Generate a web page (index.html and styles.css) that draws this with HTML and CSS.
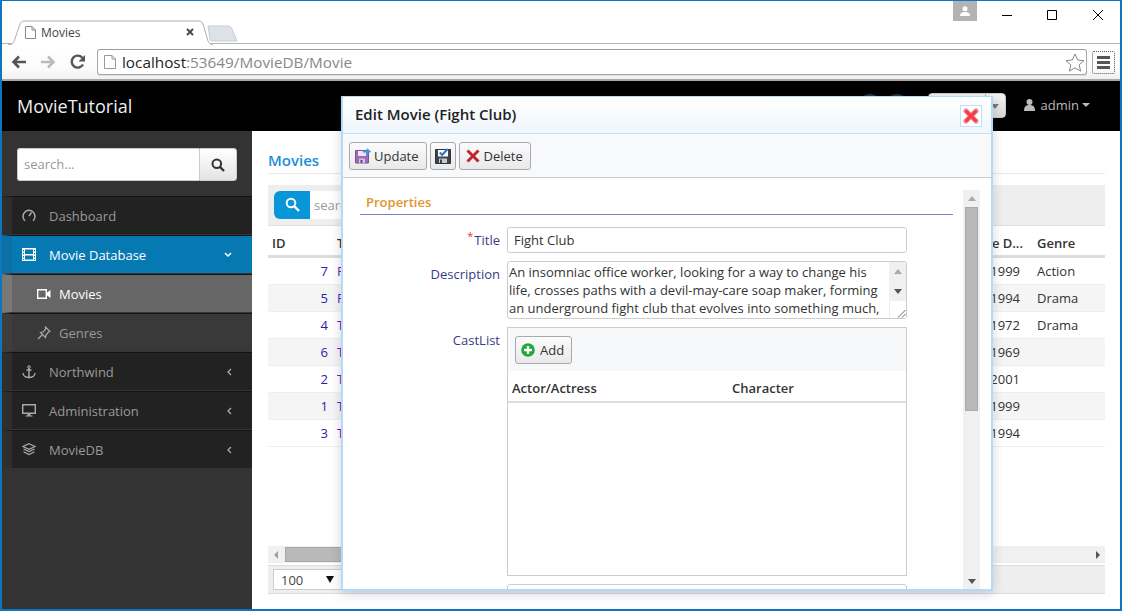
FILE: index.html
```html
<!DOCTYPE html>
<html lang="en">
<head>
<meta charset="utf-8">
<title>Movies</title>
<link rel="stylesheet" href="styles.css">
</head>
<body>
<div class="window">
  <header class="tabstrip">
    <div class="tab">
      <svg class="tab-shape" width="206" height="25" viewBox="0 0 206 25"><path d="M0 24.500h2c2 0 3-1 4-3L12 4c1-2 2-3 4-3h175c2 0 3 1 4 3l5 17c1 2 2 3.500 5 3.500" fill="#fff" stroke="#b0b0b0"/></svg>
      <svg class="tab-doc" width="11" height="13" viewBox="0 0 11 13"><path d="M.5.500h6.500l3.500 3.500v8.500h-10zM7 .5v3.500h3.500" fill="#fff" stroke="#8a8a8a"/></svg>
      <span class="tab-title">Movies</span>
      <svg class="tab-close" width="8" height="8" viewBox="0 0 8 8"><path d="M1 1l6 6M7 1l-6 6" stroke="#444" stroke-width="1.800"/></svg>
    </div>
    <svg class="newtab" width="32" height="17" viewBox="0 0 32 17"><path d="M1 1h20c2 0 3 1 4 3l5 12H5c-1 0-2-1-2-2z" fill="#dde1e8" stroke="#c8ccd4"/></svg>
    <div class="winctl">
      <div class="profile"><svg width="12" height="10" viewBox="0 0 12 10"><circle cx="6" cy="2.800" r="2.500" fill="#fff"/><path d="M1 10c0-3 2-4 5-4s5 1 5 4z" fill="#fff"/></svg></div>
      <svg class="ctl ctl-min" width="10" height="10" viewBox="0 0 10 10"><path d="M0 5.500h10" stroke="#000"/></svg>
      <svg class="ctl ctl-max" width="10" height="10" viewBox="0 0 10 10"><path d="M.5.500h9v9h-9z" fill="none" stroke="#000"/></svg>
      <svg class="ctl ctl-close" width="10" height="10" viewBox="0 0 10 10"><path d="M0 0l10 10M10 0L0 10" stroke="#000"/></svg>
    </div>
  </header>
  <div class="toolbar">
    <svg class="nav-ico" width="16" height="14" viewBox="0 0 16 14"><path d="M15 7H3M8 1.500L2.500 7 8 12.500" fill="none" stroke="#555" stroke-width="2.600"/></svg>
    <svg class="nav-ico" width="16" height="14" viewBox="0 0 16 14"><path d="M1 7h12M8 1.500L13.500 7 8 12.500" fill="none" stroke="#bbb" stroke-width="2.600"/></svg>
    <svg class="nav-ico" width="16" height="16" viewBox="0 0 16 16"><path d="M13 10.500A6 6 0 1 1 12.500 4" fill="none" stroke="#555" stroke-width="2.400"/><path d="M15 1v6.500H8.500z" fill="#555"/></svg>
    <div class="omnibox">
      <svg class="omni-doc" width="12" height="14" viewBox="0 0 12 14"><path d="M.5.500h7.500l3.500 3.500v9.500h-11zM8 .5v3.500h3.500" fill="#fff" stroke="#999"/></svg>
      <span class="url"><span class="url-host">localhost</span>:53649/MovieDB/Movie</span>
      <svg class="star" width="20" height="19" viewBox="0 0 20 19"><path d="M10 1l2.700 6 6.300.6-4.800 4.200 1.400 6.300L10 14.800l-5.600 3.300 1.400-6.300L1 7.600 7.300 7z" fill="#fff" stroke="#888"/></svg>
    </div>
    <div class="menu-btn"><span></span><span></span><span></span></div>
  </div>
  <nav class="navbar">
    <span class="brand">MovieTutorial</span>
    <div class="nav-right">
      <span class="nav-circle"></span>
      <span class="nav-circle"></span>
      <div class="nav-drop"><span class="nav-drop-main"></span><span class="nav-drop-arrow"><span class="nav-drop-caret"></span></span></div>
      <svg class="user-ico" width="11" height="12" viewBox="0 0 11 12"><circle cx="5.500" cy="3" r="3" fill="#bbb"/><path d="M0 12c0-4 1.500-6 5.500-6s5.500 2 5.500 6z" fill="#bbb"/></svg>
      <span class="user-name">admin</span>
      <span class="user-caret"></span>
    </div>
  </nav>
  <div class="app">
    <aside class="sidebar">
      <form class="side-search">
        <input class="side-input" type="text" placeholder="search...">
        <span class="side-btn"><svg width="14" height="14" viewBox="0 0 14 14"><circle cx="5.800" cy="5.800" r="4.300" fill="none" stroke="#333" stroke-width="2"/><path d="M9 9l4 4" stroke="#333" stroke-width="2.400"/></svg></span>
      </form>
      <ul class="menu">
        <li class="item">
          <svg class="ico" width="14" height="13" viewBox="0 0 14 13"><path d="M3 11.800A6 6 0 1 1 11 11.800" fill="none" stroke="#aaa" stroke-width="1.500"/><path d="M7 7l2.500-3.500" stroke="#aaa" stroke-width="1.500"/></svg>
          <span class="label">Dashboard</span>
        </li>
        <li class="item item-active">
          <svg class="ico" width="14" height="13" viewBox="0 0 14 13"><path d="M0 0h14v13H0z" fill="#fff"/><path d="M3 1.500h8v4.500H3zM3 7.500h8v4H3z" fill="#0679b3"/><path d="M1 2h1v1.500H1zM1 5h1v1.500H1zM1 8h1v1.500H1zM1 11h1v1H1zM12 2h1v1.500h-1zM12 5h1v1.500h-1zM12 8h1v1.500h-1zM12 11h1v1h-1z" fill="#0679b3"/></svg>
          <span class="label">Movie Database</span>
          <svg class="chev" width="8" height="6" viewBox="0 0 8 6"><path d="M1 1l3 3 3-3" fill="none" stroke="#fff" stroke-width="1.500"/></svg>
        </li>
        <li class="item sub sub-active">
          <svg class="ico" width="14" height="10" viewBox="0 0 14 10"><path d="M.7.700h8.600v8.600H.7z" fill="none" stroke="#fff" stroke-width="1.400"/><path d="M9.500 4L13.500 1v8l-4-3z" fill="#fff"/></svg>
          <span class="label">Movies</span>
        </li>
        <li class="item sub">
          <svg class="ico" width="14" height="14" viewBox="0 0 14 14"><path d="M8.500 1l4.500 4.500-1.500.5-2.500 3-.5 2.500L3.500 6.500 6 6l2.500-2.500zM5 9l-4 4" fill="none" stroke="#aaa" stroke-width="1.200"/></svg>
          <span class="label">Genres</span>
        </li>
        <li class="item">
          <svg class="ico" width="14" height="14" viewBox="0 0 14 14"><circle cx="7" cy="2" r="1.300" fill="none" stroke="#aaa"/><path d="M7 3v10M4.500 5h5M1 8c0 3 3 4.500 6 4.500S13 11 13 8" fill="none" stroke="#aaa" stroke-width="1.400"/></svg>
          <span class="label">Northwind</span>
          <svg class="chev" width="6" height="8" viewBox="0 0 6 8"><path d="M5 1L2 4l3 3" fill="none" stroke="#aaa" stroke-width="1.300"/></svg>
        </li>
        <li class="item">
          <svg class="ico" width="14" height="13" viewBox="0 0 14 13"><path d="M.7.700h12.600v8.600H.7z" fill="none" stroke="#aaa" stroke-width="1.400"/><path d="M5.500 10h3v1.500h2v1h-7v-1h2z" fill="#aaa"/></svg>
          <span class="label">Administration</span>
          <svg class="chev" width="6" height="8" viewBox="0 0 6 8"><path d="M5 1L2 4l3 3" fill="none" stroke="#aaa" stroke-width="1.300"/></svg>
        </li>
        <li class="item">
          <svg class="ico" width="14" height="13" viewBox="0 0 14 13"><path d="M7 .7L13 3.500 7 6.300 1 3.500zM1.500 6L7 8.600 12.500 6M1.500 8.800L7 11.500l5.500-2.700" fill="none" stroke="#aaa" stroke-width="1.200"/></svg>
          <span class="label">MovieDB</span>
          <svg class="chev" width="6" height="8" viewBox="0 0 6 8"><path d="M5 1L2 4l3 3" fill="none" stroke="#aaa" stroke-width="1.300"/></svg>
        </li>
      </ul>
    </aside>
    <main class="content">
      <h1 class="page-title">Movies</h1>
      <div class="grid-tools">
        <span class="qs-btn"><svg width="15" height="15" viewBox="0 0 15 15"><circle cx="6" cy="6" r="4.300" fill="none" stroke="#fff" stroke-width="2"/><path d="M9.500 9.500l4.500 4.500" stroke="#fff" stroke-width="2.400"/></svg></span>
        <span class="qs-input">search...</span>
      </div>
      <div class="grid-table">
        <div class="g-row g-head"><span class="c-id">ID</span><span class="c-title">Title</span><span class="c-date">Release D...</span><span class="c-genre">Genre</span></div>
        <div class="g-row"><span class="c-id num">7</span><span class="c-title link">Fight Club</span><span class="c-date">10/15/1999</span><span class="c-genre">Action</span></div>
        <div class="g-row alt"><span class="c-id num">5</span><span class="c-title link">Pulp Fiction</span><span class="c-date">10/14/1994</span><span class="c-genre">Drama</span></div>
        <div class="g-row"><span class="c-id num">4</span><span class="c-title link">The Godfather</span><span class="c-date">3/24/1972</span><span class="c-genre">Drama</span></div>
        <div class="g-row alt"><span class="c-id num">6</span><span class="c-title link">The Wild Bunch</span><span class="c-date">6/18/1969</span><span class="c-genre"></span></div>
        <div class="g-row"><span class="c-id num">2</span><span class="c-title link">The Lord of the Rings</span><span class="c-date">12/19/2001</span><span class="c-genre"></span></div>
        <div class="g-row alt"><span class="c-id num">1</span><span class="c-title link">The Matrix</span><span class="c-date">3/31/1999</span><span class="c-genre"></span></div>
        <div class="g-row"><span class="c-id num">3</span><span class="c-title link">The Shawshank Redemption</span><span class="c-date">10/14/1994</span><span class="c-genre"></span></div>
      </div>
      <div class="hscroll">
        <span class="arr arr-left"></span>
        <span class="hthumb"></span>
        <span class="arr arr-right"></span>
      </div>
      <div class="pager">
        <div class="pager-select"><span>100</span><span class="sel-caret"></span></div>
      </div>
    </main>
  </div>

  <section class="dialog">
    <div class="dlg-title">
      <span class="dlg-caption">Edit Movie (Fight Club)</span>
      <span class="dlg-close"><svg width="16" height="16" viewBox="0 0 16 16"><path d="M3 3l10 10M13 3L3 13" fill="none" stroke="#f5838c" stroke-width="5" stroke-linecap="round"/><path d="M3.500 3.500l9 9M12.500 3.500l-9 9" fill="none" stroke="#f23c4b" stroke-width="3" stroke-linecap="round"/></svg></span>
    </div>
    <div class="dlg-tools">
      <span class="btn">
        <svg width="16" height="16" viewBox="0 0 16 16"><path d="M.5 2.500h11l2 2v10.500H.5z" fill="#9a6cb8" stroke="#7b4f9c"/><path d="M3 3h8v5H3z" fill="#ece4f4"/><path d="M4 10.500h6V15H4z" fill="#cfc4d9"/><path d="M5.500 12h2v3h-2z" fill="#6a4a86"/><path d="M8 2.700h3.700V0l4.300 3.500-4.300 3.500V4.500H8z" fill="#3f97dc"/></svg>
        <span>Update</span>
      </span>
      <span class="btn btn-icon">
        <svg width="16" height="16" viewBox="0 0 16 16"><path d="M.5 1.500h15v14H.5z" fill="#3e424a" stroke="#2f3238"/><path d="M3 2h10v6.500H3z" fill="#fff"/><path d="M4 10.500h8V15H4z" fill="#c8ccd2"/><path d="M5 11.500h2V15H5z" fill="#3e424a"/><path d="M4.800 4.500l2.400 2.500L12.500 1" fill="none" stroke="#2a7ad8" stroke-width="2.200"/></svg>
      </span>
      <span class="btn btn-del">
        <svg width="14" height="14" viewBox="0 0 14 14"><path d="M1.500 1.500L12.500 12.500M12.500 1.500L1.500 12.500" fill="none" stroke="#c0272d" stroke-width="3"/></svg>
        <span>Delete</span>
      </span>
    </div>
    <div class="dlg-body">
      <div class="form">
        <div class="category">Properties</div>
        <div class="field">
          <label class="f-label"><sup class="req">*</sup>Title</label>
          <div class="f-input">Fight Club</div>
        </div>
        <div class="field">
          <label class="f-label">Description</label>
          <div class="f-area">
            <div class="f-area-text">An insomniac office worker, looking for a way to change his life, crosses paths with a devil-may-care soap maker, forming an underground fight club that evolves into something much,</div>
            <div class="f-area-bar"><span class="mini-up"></span><span class="mini-down"></span><span class="resizer"><svg width="9" height="9" viewBox="0 0 9 9"><path d="M8.500 1L1 8.500M8.500 5L5 8.500" stroke="#666"/></svg></span></div>
          </div>
        </div>
        <div class="field">
          <label class="f-label">CastList</label>
          <div class="cast">
            <div class="cast-tools">
              <span class="btn">
                <svg width="14" height="14" viewBox="0 0 14 14"><circle cx="7" cy="7" r="6.800" fill="#22a83a"/><path d="M7 3v8M3 7h8" stroke="#fff" stroke-width="2.400"/></svg>
                <span>Add</span>
              </span>
            </div>
            <div class="cast-head"><span class="cast-actor">Actor/Actress</span><span>Character</span></div>
          </div>
        </div>
        <div class="field">
          <label class="f-label"></label>
          <div class="f-next"></div>
        </div>
      </div>
      <div class="vscroll">
        <span class="v-up"></span>
        <span class="vthumb"></span>
        <span class="v-down"></span>
      </div>
    </div>
  </section>
</div>
</body>
</html>
```
FILE: styles.css
```css
* { box-sizing: border-box; }
html, body { margin: 0; padding: 0; height: 100%; overflow: hidden; background: #fff; }
body { font-family: "Open Sans", "Liberation Sans", sans-serif; font-size: 13px; color: #333; }

.window {
  position: relative;
  display: flex;
  flex-direction: column;
  width: 1122px;
  height: 611px;
  border: solid #0d76bd;
  border-width: 1px 2px 2px;
  overflow: hidden;
  background: #fff;
}

/* browser chrome */
.tabstrip { position: relative; display: flex; align-items: flex-end; height: 43px; flex: none; border-bottom: 1px solid #b4b4b4; padding-left: 6px; }
.tab { position: relative; display: flex; align-items: center; width: 202px; height: 24px; margin-bottom: -1px; z-index: 1; }
.tab-shape { position: absolute; left: 0; top: 0; }
.tab-doc { position: relative; margin-left: 17px; }
.tab-title { position: relative; margin-left: 5px; font-size: 12px; color: #444; }
.tab-close { position: relative; margin-left: auto; margin-right: 16px; margin-top: -1px; }
.newtab { margin: 0 0 1px -3px; }
.winctl { position: absolute; right: 0; top: 0; display: flex; align-items: flex-start; }
.profile { display: flex; align-items: center; justify-content: center; width: 24px; height: 20px; background: #b3b3b3; margin-right: 25px; }
.ctl { margin-top: 9px; }
.ctl-min { margin-right: 35px; }
.ctl-max { margin-right: 36px; }
.ctl-close { margin-right: 17px; }

.toolbar { display: flex; align-items: center; flex: none; height: 37px; padding: 1px 0 0 9px; background: linear-gradient(#fff, #fbfbfb 70%, #f0f0f0); border-bottom: 2px solid #a8a8a8; }
.nav-ico { margin-right: 13px; flex: none; }
.nav-ico:nth-child(3) { margin-right: 11px; margin-left: 1px; }
.omnibox { display: flex; align-items: center; width: 990px; height: 26px; background: #fff; border: 1px solid #a9a9a9; border-top-color: #9a9a9a; border-radius: 3px; padding-left: 6px; box-shadow: 0 1px 0 #ddd; }
.omni-doc { flex: none; }
.url { margin-left: 6px; font-size: 15.300px; color: #888; white-space: nowrap; }
.url-host { color: #222; }
.star { margin-left: auto; margin-right: 1px; }
.menu-btn { display: flex; flex-direction: column; justify-content: center; gap: 2px; width: 23px; height: 23px; margin-left: 5px; border: 1px dotted #555; border-radius: 2px; padding: 0 4px; }
.menu-btn span { display: block; height: 3px; background: #555; }

/* app nav */
.navbar { display: flex; align-items: center; flex: none; height: 50px; background: #000; padding-left: 15px; }
.brand { font-size: 18px; color: #eee; }
.nav-right { display: flex; align-items: center; margin-left: auto; padding-right: 30px; height: 50px; color: #bbb; }
.nav-circle { width: 24px; height: 24px; border-radius: 50%; background: #1b3b50; margin-right: 3px; }
.nav-drop { display: flex; width: 78px; height: 25px; margin: 0 18px 1px 16px; border-radius: 4px; background: linear-gradient(#f4f4f4, #d8d8d8); border: 1px solid #ccc; }
.nav-drop-main { flex: 1; border-right: 1px solid #bbb; }
.nav-drop-arrow { display: flex; align-items: center; justify-content: center; width: 19px; padding-top: 2px; }
.nav-drop-caret { width: 0; height: 0; border: 4px solid transparent; border-top: 5px solid #777; border-bottom: 0; }
.user-ico { margin-right: 6px; margin-bottom: 2px; }
.user-name { font-size: 13px; color: #bbb; margin-bottom: 2px; }
.user-caret { width: 0; height: 0; margin: 0 0 2px 3px; border: 4px solid transparent; border-top-color: #bbb; border-bottom: 0; }

.app { display: flex; flex: 1; min-height: 0; }

/* sidebar */
.sidebar { width: 250px; flex: none; background: #333; padding-top: 17px; }
.side-search { display: flex; margin: 0 15px 15px; height: 33px; }
.side-input { flex: none; width: 182px; height: 33px; border: 1px solid #ccc; border-right: 0; border-radius: 3px 0 0 3px; background: #fff; padding: 0 6px 2px; font: 13px "Open Sans", sans-serif; }
.side-input::placeholder { color: #999; opacity: 1; }
.side-btn { display: flex; align-items: center; justify-content: center; width: 38px; height: 33px; background: linear-gradient(#fff, #e4e4e4); border: 1px solid #ccc; border-radius: 0 3px 3px 0; }
.menu { list-style: none; margin: 0; padding: 0; }
.item { display: flex; align-items: center; height: 39px; background: #222; border-left: 10px solid #2e2e2e; border-top: 1px solid #141414; border-bottom: 1px solid #353535; padding-left: 10px; padding-right: 20px; color: #999; }
.item .ico { flex: none; width: 14px; margin-right: 13px; }
.item .label { flex: 1; }
.item-active { background: #0679b3; border-left-color: #0a70a6; color: #fff; }
.sub { background: #393939; border-left-color: #3e3e3e; padding-left: 25px; }
.item.sub .ico { margin-right: 8px; }
.sub-active { background: #666; border-left-color: #787878; color: #fff; }

/* content */
.content { flex: 1; min-width: 0; display: flex; flex-direction: column; padding: 19px 15px 15px 16px; }
.page-title { margin: 0; height: 24px; font-size: 15px; line-height: 20px; font-weight: 600; color: #1b8fd6; border-bottom: 1px solid #e8e8e8; flex: none; }
.grid-tools { display: flex; align-items: center; flex: none; height: 41px; margin-top: 11px; padding: 0 6px 1px; background: #eee; border-bottom: 1px solid #e0e0e0; }
.qs-btn { display: flex; align-items: center; justify-content: center; width: 36px; height: 28px; background: #0896d8; border-radius: 6px 0 0 6px; }
.qs-input { width: 200px; height: 28px; line-height: 28px; background: #fff; padding-left: 4px; color: #999; }
.grid-table { flex: 1; }
.g-row { display: grid; grid-template-columns: 60px 604px 92px 1fr; height: 27px; align-items: center; border-bottom: 1px solid #eee; color: #333; }
.g-row > span { white-space: nowrap; overflow: hidden; }
.alt { background: #f5f5f5; }
.g-head { height: 32px; font-weight: 600; border-bottom: 3px solid #ddd; padding-top: 5px; }
.c-id { padding-left: 4px; }
.num { text-align: right; padding: 0; color: #2424a8; }
.c-title { padding-left: 9px; }
.link { color: #6a1bb5; }
.c-date { text-align: right; padding-right: 4px; }
.g-head .c-date { padding-right: 1px; }
.c-genre { padding-left: 13px; }

.hscroll { display: flex; align-items: center; flex: none; height: 17px; background: #f0f0f0; }
.arr { width: 0; height: 0; border: 4px solid transparent; }
.arr-left { margin-left: 6px; border-right-color: #a0a0a0; border-left: 0; }
.hthumb { width: 600px; height: 15px; margin-left: 7px; background: #b9b9b9; border: 1px solid #a8a8a8; }
.arr-right { margin-left: auto; margin-right: 5px; border-left-color: #555; border-right: 0; }
.pager { display: flex; align-items: center; flex: none; height: 29px; margin-top: 2px; padding-left: 5px; background: #eee; border-top: 1px solid #ddd; border-bottom: 1px solid #ddd; }
.pager-select { display: flex; align-items: center; justify-content: space-between; width: 70px; height: 21px; padding: 0 6px 0 7px; background: #fff; border: 1px solid #ccc; color: #444; }
.sel-caret { width: 0; height: 0; border: 4px solid transparent; border-top: 7px solid #111; border-bottom: 0; margin-right: 2px; }

/* dialog */
.dialog {
  position: absolute;
  left: 339px;
  top: 95px;
  width: 652px;
  height: 495px;
  display: flex;
  flex-direction: column;
  background: #fff;
  border: 2px solid #b2dcf6;
  border-top-width: 1px;
  box-shadow: 0 3px 10px rgba(60, 60, 110, .22);
  overflow: hidden;
}
.dlg-title { display: flex; align-items: center; flex: none; height: 37px; padding: 0 9px 2px 12px; background: linear-gradient(#fff, #eff6fc); border-bottom: 1px solid #c3e2f5; }
.dlg-caption { font-size: 15px; font-weight: 600; color: #222; }
.dlg-close { display: flex; align-items: center; justify-content: center; width: 22px; height: 22px; margin-left: auto; margin-top: 3px; border: 1px solid #bfe0f5; background: #fff; }
.dlg-tools { display: flex; align-items: center; gap: 3px; flex: none; height: 44px; padding: 0 6px; background: #f7f9fb; border-bottom: 1px solid #ccc; }
.btn { display: inline-flex; align-items: center; gap: 3px; height: 28px; padding: 0 7px 0 5px; border: 1px solid #aaa; border-radius: 3px; background: linear-gradient(#fbfbfb, #e9e9e9); color: #333; }
.btn-icon { padding: 0 4px; }
.btn-del { gap: 4px; padding-left: 6px; }
.dlg-body { display: flex; flex: 1; min-height: 0; overflow: hidden; }
.form { flex: none; width: 593px; margin-left: 17px; padding-top: 15px; }
.category { height: 22px; padding-left: 6px; line-height: 18px; font-size: 13px; font-weight: 600; color: #e0962e; border-bottom: 1px solid #7a80c8; margin-bottom: 12px; }
.field { display: flex; margin-bottom: 8px; }
.f-label { flex: none; width: 140px; margin-right: 7px; padding-top: 4px; text-align: right; color: #3a3a85; }
.req { color: #e33; font-size: 11px; line-height: 0; margin-right: 1px; }
.f-input { width: 400px; height: 26px; line-height: 24px; padding-left: 6px; border: 1px solid #ccc; border-radius: 3px; color: #333; }
.f-area { display: flex; width: 400px; height: 58px; border: 1px solid #ccc; border-radius: 3px; overflow: hidden; }
.f-area-text { flex: 1; padding: 1px 1px; line-height: 18px; color: #333; overflow: hidden; }
.f-area-bar { display: flex; flex-direction: column; align-items: center; flex: none; width: 17px; background: #f0f0f0; }
.mini-up { width: 0; height: 0; margin-top: 7px; border: 4px solid transparent; border-bottom: 5px solid #aaa; border-top: 0; }
.mini-down { width: 0; height: 0; margin-top: 15px; border: 4px solid transparent; border-top: 5px solid #555; border-bottom: 0; }
.resizer { display: flex; align-items: flex-end; justify-content: flex-end; width: 17px; height: 17px; margin-top: auto; background: #fff; border-left: 1px solid #eee; }
.cast { width: 400px; height: 249px; border: 1px solid #ccc; }
.cast-tools { display: flex; align-items: center; height: 43px; padding-left: 7px; background: #f7f8fa; }
.cast-tools .btn { gap: 5px; }
.cast-head { display: flex; align-items: center; height: 32px; padding: 4px 0 0 4px; font-weight: 600; color: #333; border-bottom: 2px solid #ddd; }
.cast-actor { width: 220px; }
.f-next { width: 400px; height: 26px; border: 1px solid #ccc; border-radius: 3px; }
.vscroll { display: flex; flex-direction: column; align-items: center; flex: none; width: 17px; margin: 12px 0 0 10px; background: #f0f0f0; }
.v-up { width: 0; height: 0; margin-top: 6px; border: 4px solid transparent; border-bottom: 5px solid #aaa; border-top: 0; }
.vthumb { width: 13px; height: 204px; margin-top: 6px; background: #b9b9b9; border: 1px solid #aaa; }
.v-down { width: 0; height: 0; margin-top: auto; margin-bottom: 5px; border: 4px solid transparent; border-top: 5px solid #555; border-bottom: 0; }
```
